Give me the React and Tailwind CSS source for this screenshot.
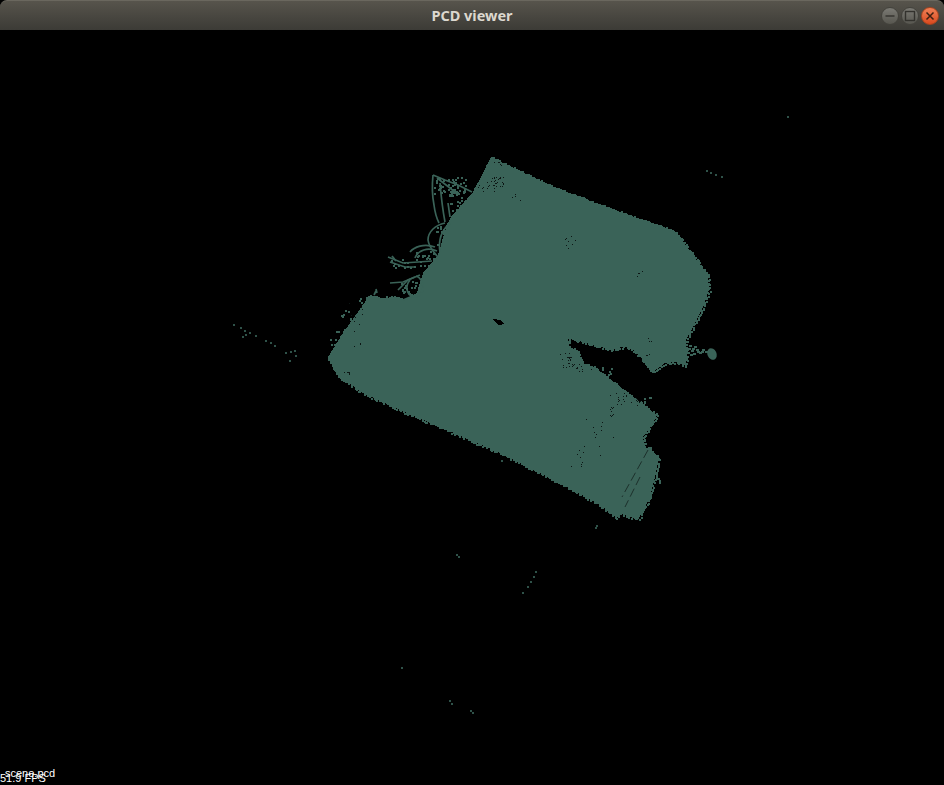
import { useMemo } from 'react'

const CLOUD = '#3a6358'

// outline of the point cloud, in canvas coordinates (window y minus 30)
const outline = [
  [491, 127], [520, 141], [552, 156], [590, 171], [632, 186], [675, 201], [690, 221], [708, 245], [709, 260],
  [703, 277], [694, 295], [686, 310], [687, 327], [686, 336], [676, 332], [665, 333], [653, 342], [647, 336],
  [640, 326], [633, 320], [625, 316], [612, 320], [590, 314], [568, 308], [570, 318], [577, 320], [583, 333],
  [595, 338], [620, 357], [633, 367], [657, 385], [650, 398], [643, 407], [645, 418], [649, 418], [659, 428],
  [655, 447], [650, 467], [638, 490], [620, 483], [617, 488], [600, 475], [560, 453], [500, 423], [440, 397],
  [400, 380], [363, 363], [337, 345], [333, 336], [328, 327], [345, 300], [358, 282], [370, 265], [380, 268],
  [397, 267], [403, 270], [417, 263], [423, 243], [438, 225], [447, 195], [452, 185], [462, 175], [473, 162],
  [482, 145],
]

// thin strands that stick out of the upper left edge
const strands = [
  'M433 145 C432 155 432 165 434 175 C435 183 437 189 439 193',
  'M440 153 C441 165 442 176 445 192',
  'M448 173 L450 187',
  'M433 145 L445 150 L458 155 L472 162',
  'M437 148 L450 158 L458 165',
  'M445 193 C435 195 428 202 428 210 C429 218 434 222 438 227',
  'M450 193 C442 200 438 210 440 222',
  'M410 222 C414 217 424 213 435 217',
  'M415 228 C418 220 428 217 437 221',
  'M388 227 L403 233 L418 232 L432 231',
  'M390 232 L405 237 L414 237',
  'M392 226 L396 231',
  'M390 253 L403 252 L420 245',
  'M398 260 L408 250 L415 247',
  'M410 250 C405 256 406 264 413 267 C419 267 423 262 423 257 C423 252 420 247 416 246',
  'M403 270 L415 265',
  'M374 265 L376 261 M377 263 L376 259',
]

// holes and sparse patches inside the cloud: [x, y, spreadX, spreadY, count]
const patches = [
  [495, 150, 8, 6, 26],
  [498, 133, 4, 2, 5],
  [485, 158, 9, 4, 8],
  [518, 167, 8, 5, 4],
  [572, 212, 7, 7, 8],
  [640, 243, 3, 3, 4],
  [567, 330, 7, 7, 22],
  [582, 338, 10, 4, 10],
  [612, 382, 2, 6, 12],
  [620, 368, 12, 6, 14],
  [640, 372, 10, 4, 8],
  [600, 395, 14, 12, 7],
  [590, 420, 12, 16, 10],
  [578, 430, 8, 8, 4],
  [355, 295, 8, 22, 12],
  [345, 343, 6, 1, 8],
  [650, 310, 2, 2, 3],
  [648, 325, 2, 2, 3],
]

// loose points around the rough parts of the edge, same layout as patches
const scatter = [
  [450, 155, 16, 8, 50],
  [456, 170, 8, 10, 30],
  [442, 205, 6, 12, 16],
  [425, 228, 12, 8, 28],
  [412, 258, 11, 7, 24],
  [400, 232, 11, 5, 12],
  [345, 292, 11, 12, 16],
  [335, 318, 6, 10, 14],
  [364, 270, 6, 5, 10],
  [392, 268, 10, 3, 10],
  [600, 342, 12, 5, 10],
  [640, 372, 12, 6, 10],
  [657, 440, 2, 14, 10],
]

// far away points of the scan
const stray = [
  [233, 294], [240, 297], [244, 300], [249, 302], [242, 306], [245, 304], [255, 305], [265, 310], [270, 312],
  [274, 315], [285, 322], [290, 321], [294, 320], [295, 325], [289, 330], [787, 86], [706, 140], [710, 142],
  [715, 144], [721, 146], [456, 524], [458, 526], [535, 541], [533, 546], [530, 551], [527, 556], [522, 562],
  [401, 637], [449, 670], [451, 673], [470, 680], [472, 682], [596, 495], [501, 430], [595, 497],
]

// points between the body and the small blob on the right
const tail = [
  [688, 318], [691, 320], [694, 316], [696, 319], [699, 322], [702, 319], [705, 321], [693, 323], [687, 322],
  [689, 315], [692, 318], [697, 321], [701, 321], [685, 320], [690, 324],
]

function rng(seed) {
  let s = seed
  return () => {
    s = (s * 16807) % 2147483647
    return s / 2147483647
  }
}

function spread(list, r) {
  const out = []
  list.forEach(([x, y, sx, sy, n]) => {
    for (let i = 0; i < n; i++) {
      out.push([Math.round(x + (r() * 2 - 1) * sx), Math.round(y + (r() * 2 - 1) * sy)])
    }
  })
  return out
}

function PointCloud() {
  const { dark, loose, edge } = useMemo(() => {
    const r = rng(4242)
    const dark = spread(patches, r)
    const loose = spread(scatter, r)
    // roughen the outline with single points
    const edge = []
    outline.forEach(([x, y], i) => {
      const [nx, ny] = outline[(i + 1) % outline.length]
      const steps = Math.ceil(Math.hypot(nx - x, ny - y) / 2)
      for (let k = 0; k < steps; k++) {
        const t = k / steps
        edge.push([Math.round(x + (nx - x) * t + (r() * 2 - 1)), Math.round(y + (ny - y) * t + (r() * 2 - 1))])
      }
    })
    return { dark, loose, edge }
  }, [])

  return (
    <svg viewBox="0 0 944 755" className="block w-full h-full" shapeRendering="crispEdges">
      <polygon points={outline.map((p) => p.join(',')).join(' ')} fill={CLOUD} />
      {edge.map(([x, y], i) => <rect key={i} x={x} y={y} width="2" height="2" fill={CLOUD} />)}
      <g shapeRendering="auto" fill="none" stroke={CLOUD} strokeWidth="1.7">
        {strands.map((d) => <path key={d} d={d} />)}
      </g>
      {loose.map(([x, y], i) => <rect key={i} x={x} y={y} width="2" height="2" fill={CLOUD} />)}
      <ellipse cx="712" cy="324" rx="4.5" ry="6" transform="rotate(-25 712 324)" fill={CLOUD} shapeRendering="auto" />
      {tail.map(([x, y], i) => <rect key={i} x={x} y={y} width="3" height="2" fill={CLOUD} />)}
      {dark.map(([x, y], i) => <rect key={i} x={x} y={y} width="1" height="1" fill="#0c1614" />)}
      <path d="M493 289 L500 290 L505 294 L498 295 Z" fill="#000" />
      <path d="M648 420 L622 467 M640 447 L625 477" stroke="#1c302b" strokeWidth="1" strokeDasharray="9 4" fill="none" shapeRendering="auto" />
      {stray.map(([x, y], i) => <rect key={i} x={x} y={y} width="2" height="2" fill="#2f5249" />)}
    </svg>
  )
}

function WinButton({ close, children }) {
  return (
    <div className={`w-[18px] h-[18px] rounded-full flex items-center justify-center border ${close ? 'bg-gradient-to-b from-[#f08055] to-[#d9481c] border-[#a8441f]' : 'bg-gradient-to-b from-[#7b7a74] to-[#57564f] border-[#43423c]'}`}>
      {children}
    </div>
  )
}

export default function App() {
  return (
    <div className="relative w-[944px] h-[785px] bg-black flex flex-col overflow-hidden">
      <div className="relative h-[30px] shrink-0 rounded-t-[7px] bg-gradient-to-b from-[#57544c] to-[#3c3b36] border-t border-[#6a675e] flex items-center justify-center">
        <span className="text-[14.5px] font-bold text-[#dcd8cf] [font-family:'Noto_Sans',sans-serif]">PCD viewer</span>
        <div className="absolute right-[5px] top-[6px] flex gap-[2px]">
          <WinButton>
            <svg width="12" height="12" viewBox="0 0 12 12"><path d="M1.5 6H10.5" stroke="#33322d" strokeWidth="1.4" /></svg>
          </WinButton>
          <WinButton>
            <svg width="12" height="12" viewBox="0 0 12 12"><rect x="1.5" y="1.5" width="9" height="9" fill="none" stroke="#33322d" strokeWidth="1.4" /></svg>
          </WinButton>
          <WinButton close>
            <svg width="12" height="12" viewBox="0 0 12 12"><path d="M2.5 2.5L9.5 9.5M9.5 2.5L2.5 9.5" stroke="#3f2012" strokeWidth="1.5" /></svg>
          </WinButton>
        </div>
      </div>
      <div className="flex-1 min-h-0">
        <PointCloud />
      </div>
      <span className="absolute left-[5px] bottom-[6px] text-[11px] leading-[11px] text-white [font-family:'Liberation_Sans',sans-serif]">scene.pcd</span>
      <span className="absolute left-0 bottom-[1px] text-[11px] leading-[11px] text-white [font-family:'Liberation_Sans',sans-serif]">51.9 FPS</span>
    </div>
  )
}
